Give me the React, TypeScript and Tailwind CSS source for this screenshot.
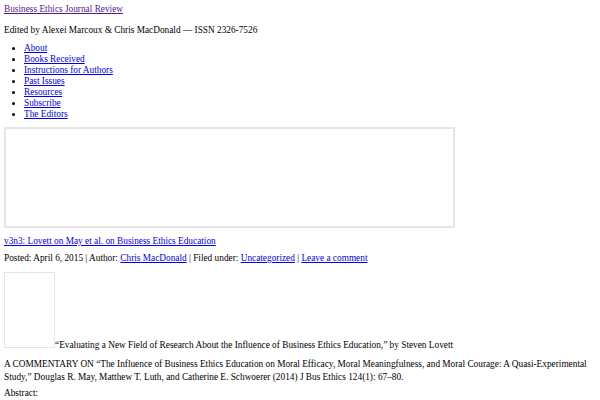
const navItems = [
  "About",
  "Books Received",
  "Instructions for Authors",
  "Past Issues",
  "Resources",
  "Subscribe",
  "The Editors",
];

export default function App() {
  return (
    <div className="min-h-[400px] bg-white px-[4px] pt-[4px] text-[9.3px] leading-[11px] text-black font-['Liberation_Serif',serif]">
      <a href="#" className="text-[#551a8b] underline">
        Business Ethics Journal Review
      </a>
      <p className="mt-[10px]">Edited by Alexei Marcoux &amp; Chris MacDonald — ISSN 2326-7526</p>
      <ul className="mt-[7px] list-disc pl-[20px]">
        {navItems.map((item) => (
          <li key={item}>
            <a href="#" className="text-[#0000ee] underline">
              {item}
            </a>
          </li>
        ))}
      </ul>
      <div className="mt-[7px] h-[101px] w-[451px] border-2 border-[#e6e6e6]" />
      <a href="#" className="mt-[8px] block w-fit text-[#0000ee] underline">
        v3n3: Lovett on May et al. on Business Ethics Education
      </a>
      <p className="mt-[6px]">
        Posted: April 6, 2015 | Author:{" "}
        <a href="#" className="text-[#0000ee] underline">Chris MacDonald</a> | Filed under:{" "}
        <a href="#" className="text-[#0000ee] underline">Uncategorized</a> |{" "}
        <a href="#" className="text-[#0000ee] underline">Leave a comment</a>
      </p>
      <p className="mt-[8px]">
        <span className="inline-block h-[76px] w-[51px] border border-[#e6e6e6] align-baseline" />
        “Evaluating a New Field of Research About the Influence of Business Ethics Education,” by Steven Lovett
      </p>
      <p className="mt-[7px] leading-[12.5px]">
        A COMMENTARY ON “The Influence of Business Ethics Education on Moral Efficacy, Moral Meaningfulness, and Moral
        Courage: A Quasi-Experimental <br />Study,” Douglas R. May, Matthew T. Luth, and Catherine E. Schwoerer (2014) J Bus
        Ethics 124(1): 67–80.
      </p>
      <p className="mt-[5px]">Abstract:</p>
    </div>
  );
}
